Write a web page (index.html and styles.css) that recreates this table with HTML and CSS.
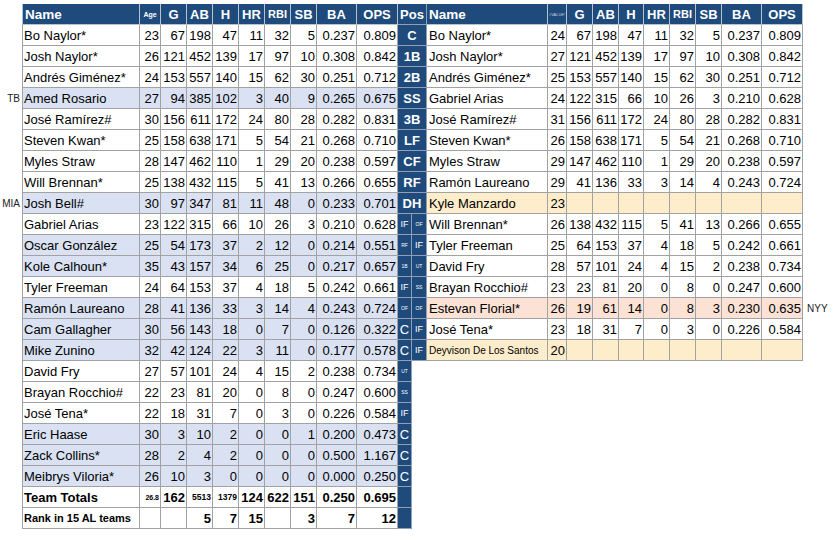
FILE: index.html
```html
<!DOCTYPE html>
<html>
<head>
<meta charset="utf-8">
<link rel="stylesheet" href="styles.css">
</head>
<body>
<div class="sheet">
  <div class="row hd"><span class="lab"></span>
    <div class="L"><span class="nm">Name</span><span class="f7">Age</span><span>G</span><span>AB</span><span>H</span><span>HR</span><span class="f11">RBI</span><span>SB</span><span>BA</span><span>OPS</span></div>
    <span class="pp">Pos</span>
    <div class="R"><span class="nm">Name</span><span class="f4">#VALUE!</span><span>G</span><span>AB</span><span>H</span><span>HR</span><span class="f11">RBI</span><span>SB</span><span>BA</span><span>OPS</span></div>
    <span class="lab"></span></div>

  <div class="row"><span class="lab"></span>
    <div class="L"><span class="nm">Bo Naylor*</span><span>23</span><span>67</span><span>198</span><span>47</span><span>11</span><span>32</span><span>5</span><span>0.237</span><span>0.809</span></div>
    <span class="pp">C</span>
    <div class="R"><span class="nm">Bo Naylor*</span><span>24</span><span>67</span><span>198</span><span>47</span><span>11</span><span>32</span><span>5</span><span>0.237</span><span>0.809</span></div>
    <span class="lab"></span></div>

  <div class="row"><span class="lab"></span>
    <div class="L"><span class="nm">Josh Naylor*</span><span>26</span><span>121</span><span>452</span><span>139</span><span>17</span><span>97</span><span>10</span><span>0.308</span><span>0.842</span></div>
    <span class="pp">1B</span>
    <div class="R"><span class="nm">Josh Naylor*</span><span>27</span><span>121</span><span>452</span><span>139</span><span>17</span><span>97</span><span>10</span><span>0.308</span><span>0.842</span></div>
    <span class="lab"></span></div>

  <div class="row"><span class="lab"></span>
    <div class="L"><span class="nm">Andrés Giménez*</span><span>24</span><span>153</span><span>557</span><span>140</span><span>15</span><span>62</span><span>30</span><span>0.251</span><span>0.712</span></div>
    <span class="pp">2B</span>
    <div class="R"><span class="nm">Andrés Giménez*</span><span>25</span><span>153</span><span>557</span><span>140</span><span>15</span><span>62</span><span>30</span><span>0.251</span><span>0.712</span></div>
    <span class="lab"></span></div>

  <div class="row"><span class="lab">TB</span>
    <div class="L hl"><span class="nm">Amed Rosario</span><span>27</span><span>94</span><span>385</span><span>102</span><span>3</span><span>40</span><span>9</span><span>0.265</span><span>0.675</span></div>
    <span class="pp">SS</span>
    <div class="R"><span class="nm">Gabriel Arias</span><span>24</span><span>122</span><span>315</span><span>66</span><span>10</span><span>26</span><span>3</span><span>0.210</span><span>0.628</span></div>
    <span class="lab"></span></div>

  <div class="row"><span class="lab"></span>
    <div class="L"><span class="nm">José Ramírez#</span><span>30</span><span>156</span><span>611</span><span>172</span><span>24</span><span>80</span><span>28</span><span>0.282</span><span>0.831</span></div>
    <span class="pp">3B</span>
    <div class="R"><span class="nm">José Ramírez#</span><span>31</span><span>156</span><span>611</span><span>172</span><span>24</span><span>80</span><span>28</span><span>0.282</span><span>0.831</span></div>
    <span class="lab"></span></div>

  <div class="row"><span class="lab"></span>
    <div class="L"><span class="nm">Steven Kwan*</span><span>25</span><span>158</span><span>638</span><span>171</span><span>5</span><span>54</span><span>21</span><span>0.268</span><span>0.710</span></div>
    <span class="pp">LF</span>
    <div class="R"><span class="nm">Steven Kwan*</span><span>26</span><span>158</span><span>638</span><span>171</span><span>5</span><span>54</span><span>21</span><span>0.268</span><span>0.710</span></div>
    <span class="lab"></span></div>

  <div class="row"><span class="lab"></span>
    <div class="L"><span class="nm">Myles Straw</span><span>28</span><span>147</span><span>462</span><span>110</span><span>1</span><span>29</span><span>20</span><span>0.238</span><span>0.597</span></div>
    <span class="pp">CF</span>
    <div class="R"><span class="nm">Myles Straw</span><span>29</span><span>147</span><span>462</span><span>110</span><span>1</span><span>29</span><span>20</span><span>0.238</span><span>0.597</span></div>
    <span class="lab"></span></div>

  <div class="row"><span class="lab"></span>
    <div class="L"><span class="nm">Will Brennan*</span><span>25</span><span>138</span><span>432</span><span>115</span><span>5</span><span>41</span><span>13</span><span>0.266</span><span>0.655</span></div>
    <span class="pp">RF</span>
    <div class="R"><span class="nm">Ramón Laureano</span><span>29</span><span>41</span><span>136</span><span>33</span><span>3</span><span>14</span><span>4</span><span>0.243</span><span>0.724</span></div>
    <span class="lab"></span></div>

  <div class="row"><span class="lab">MIA</span>
    <div class="L hl"><span class="nm">Josh Bell#</span><span>30</span><span>97</span><span>347</span><span>81</span><span>11</span><span>48</span><span>0</span><span>0.233</span><span>0.701</span></div>
    <span class="pp">DH</span>
    <div class="R yl"><span class="nm">Kyle Manzardo</span><span>23</span><span></span><span></span><span></span><span></span><span></span><span></span><span></span><span></span></div>
    <span class="lab"></span></div>

  <div class="row"><span class="lab"></span>
    <div class="L"><span class="nm">Gabriel Arias</span><span>23</span><span>122</span><span>315</span><span>66</span><span>10</span><span>26</span><span>3</span><span>0.210</span><span>0.628</span></div>
    <span class="pa f9">IF</span><span class="pb f5">OF</span>
    <div class="R"><span class="nm">Will Brennan*</span><span>26</span><span>138</span><span>432</span><span>115</span><span>5</span><span>41</span><span>13</span><span>0.266</span><span>0.655</span></div>
    <span class="lab"></span></div>

  <div class="row"><span class="lab"></span>
    <div class="L hl"><span class="nm">Oscar González</span><span>25</span><span>54</span><span>173</span><span>37</span><span>2</span><span>12</span><span>0</span><span>0.214</span><span>0.551</span></div>
    <span class="pa f5">RF</span><span class="pb f9">IF</span>
    <div class="R"><span class="nm">Tyler Freeman</span><span>25</span><span>64</span><span>153</span><span>37</span><span>4</span><span>18</span><span>5</span><span>0.242</span><span>0.661</span></div>
    <span class="lab"></span></div>

  <div class="row"><span class="lab"></span>
    <div class="L hl"><span class="nm">Kole Calhoun*</span><span>35</span><span>43</span><span>157</span><span>34</span><span>6</span><span>25</span><span>0</span><span>0.217</span><span>0.657</span></div>
    <span class="pa f5">1B</span><span class="pb f5">UT</span>
    <div class="R"><span class="nm">David Fry</span><span>28</span><span>57</span><span>101</span><span>24</span><span>4</span><span>15</span><span>2</span><span>0.238</span><span>0.734</span></div>
    <span class="lab"></span></div>

  <div class="row"><span class="lab"></span>
    <div class="L"><span class="nm">Tyler Freeman</span><span>24</span><span>64</span><span>153</span><span>37</span><span>4</span><span>18</span><span>5</span><span>0.242</span><span>0.661</span></div>
    <span class="pa f9">IF</span><span class="pb f5">SS</span>
    <div class="R"><span class="nm">Brayan Rocchio#</span><span>23</span><span>23</span><span>81</span><span>20</span><span>0</span><span>8</span><span>0</span><span>0.247</span><span>0.600</span></div>
    <span class="lab"></span></div>

  <div class="row"><span class="lab"></span>
    <div class="L hl"><span class="nm">Ramón Laureano</span><span>28</span><span>41</span><span>136</span><span>33</span><span>3</span><span>14</span><span>4</span><span>0.243</span><span>0.724</span></div>
    <span class="pa f5">OF</span><span class="pb f5">OF</span>
    <div class="R or"><span class="nm">Estevan Florial*</span><span>26</span><span>19</span><span>61</span><span>14</span><span>0</span><span>8</span><span>3</span><span>0.230</span><span>0.635</span></div>
    <span class="lab rl">NYY</span></div>

  <div class="row"><span class="lab"></span>
    <div class="L hl"><span class="nm">Cam Gallagher</span><span>30</span><span>56</span><span>143</span><span>18</span><span>0</span><span>7</span><span>0</span><span>0.126</span><span>0.322</span></div>
    <span class="pa f13">C</span><span class="pb f9">IF</span>
    <div class="R"><span class="nm">José Tena*</span><span>23</span><span>18</span><span>31</span><span>7</span><span>0</span><span>3</span><span>0</span><span>0.226</span><span>0.584</span></div>
    <span class="lab"></span></div>

  <div class="row"><span class="lab"></span>
    <div class="L hl"><span class="nm">Mike Zunino</span><span>32</span><span>42</span><span>124</span><span>22</span><span>3</span><span>11</span><span>0</span><span>0.177</span><span>0.578</span></div>
    <span class="pa f13">C</span><span class="pb f9">IF</span>
    <div class="R yl"><span class="nm small">Deyvison De Los Santos</span><span>20</span><span></span><span></span><span></span><span></span><span></span><span></span><span></span><span></span></div>
    <span class="lab"></span></div>

  <div class="row"><span class="lab"></span>
    <div class="L"><span class="nm">David Fry</span><span>27</span><span>57</span><span>101</span><span>24</span><span>4</span><span>15</span><span>2</span><span>0.238</span><span>0.734</span></div>
    <span class="pa f5">UT</span><span class="gap"></span></div>

  <div class="row"><span class="lab"></span>
    <div class="L"><span class="nm">Brayan Rocchio#</span><span>22</span><span>23</span><span>81</span><span>20</span><span>0</span><span>8</span><span>0</span><span>0.247</span><span>0.600</span></div>
    <span class="pa f5">SS</span><span class="gap"></span></div>

  <div class="row"><span class="lab"></span>
    <div class="L"><span class="nm">José Tena*</span><span>22</span><span>18</span><span>31</span><span>7</span><span>0</span><span>3</span><span>0</span><span>0.226</span><span>0.584</span></div>
    <span class="pa f9">IF</span><span class="gap"></span></div>

  <div class="row"><span class="lab"></span>
    <div class="L hl"><span class="nm">Eric Haase</span><span>30</span><span>3</span><span>10</span><span>2</span><span>0</span><span>0</span><span>1</span><span>0.200</span><span>0.473</span></div>
    <span class="pa f13">C</span><span class="gap"></span></div>

  <div class="row"><span class="lab"></span>
    <div class="L hl"><span class="nm">Zack Collins*</span><span>28</span><span>2</span><span>4</span><span>2</span><span>0</span><span>0</span><span>0</span><span>0.500</span><span>1.167</span></div>
    <span class="pa f13">C</span><span class="gap"></span></div>

  <div class="row"><span class="lab"></span>
    <div class="L hl"><span class="nm">Meibrys Viloria*</span><span>26</span><span>10</span><span>3</span><span>0</span><span>0</span><span>0</span><span>0</span><span>0.000</span><span>0.250</span></div>
    <span class="pa f13">C</span><span class="gap"></span></div>

  <div class="row"><span class="lab"></span>
    <div class="L tot"><span class="nm">Team Totals</span><span class="f7">26.8</span><span>162</span><span class="f8">5513</span><span class="f8">1379</span><span>124</span><span>622</span><span>151</span><span>0.250</span><span>0.695</span></div>
    <span class="pa"></span><span class="gap"></span></div>

  <div class="row"><span class="lab"></span>
    <div class="L tot"><span class="nm f11">Rank in 15 AL teams</span><span></span><span></span><span>5</span><span>7</span><span>15</span><span></span><span>3</span><span>7</span><span>12</span></div>
    <span class="pa"></span><span class="gap"></span></div>
</div>
</body>
</html>
```

FILE: styles.css
```css
* {
  box-sizing: border-box;
}

body {
  margin: 0;
  background: #ffffff;
  color: #000000;
  font-family: "Liberation Sans", Arial, sans-serif;
  font-size: 13px;
}

.sheet {
  display: grid;
  grid-template-columns: 22px 118px 21px 26px 26px 26px 26px 26px 26px 40px 41px 14px 15px 121px 19px 26px 26px 25px 26px 26px 26px 40px 41px 30px;
  grid-auto-rows: 21px;
  padding-top: 4px;
}

.row,
.L,
.R {
  display: contents;
}

.L > *,
.R > *,
.pp,
.pa,
.pb {
  display: flex;
  align-items: center;
  justify-content: flex-end;
  padding-right: 1px;
  border-right: 1px solid #a2a2a2;
  border-bottom: 1px solid #a2a2a2;
  white-space: nowrap;
  overflow: hidden;
}

.L > .nm {
  border-left: 1px solid #a2a2a2;
  padding-left: 1px;
}

.nm {
  justify-content: flex-start;
  padding-left: 2px;
}

.hd .L > *,
.hd .R > * {
  background: #1f4a7c;
  color: #ffffff;
  font-weight: bold;
  justify-content: center;
  padding: 0;
  border-color: #b9c2cf;
}

.hd .L > .nm,
.hd .R > .nm {
  justify-content: flex-start;
  padding-left: 2px;
  font-size: 13.5px;
}

.hd .R > .f4 {
  color: #c8d0dc;
  font-weight: normal;
}

.pp {
  grid-column: span 2;
  background: #1f4a7c;
  color: #ffffff;
  font-weight: bold;
  justify-content: center;
  padding: 0;
}

.pa,
.pb {
  background: #1f4a7c;
  color: #ffffff;
  justify-content: center;
  padding: 0;
}

.pp,
.pa,
.pb {
  border-color: #8f9fb5;
}

.gap {
  grid-column: span 12;
}

.lab {
  display: flex;
  align-items: center;
  justify-content: flex-end;
  padding-right: 2px;
  font-size: 10px;
  color: #222222;
}

.lab.rl {
  justify-content: flex-start;
  padding-left: 4px;
  padding-right: 0;
}

.hl > * {
  background: #d9e1f2;
}

.yl > * {
  background: #fdedcb;
}

.or > * {
  background: #fbe2d4;
}

.tot > * {
  font-weight: bold;
}

.small {
  font-size: 10px;
}

.f4 { font-size: 4px; }
.f5 { font-size: 5px; }
.f7 { font-size: 7px; }
.f8 { font-size: 8.5px; }
.f9 { font-size: 9px; }
.f11 { font-size: 11px; }
.f13 { font-size: 13px; }
```
